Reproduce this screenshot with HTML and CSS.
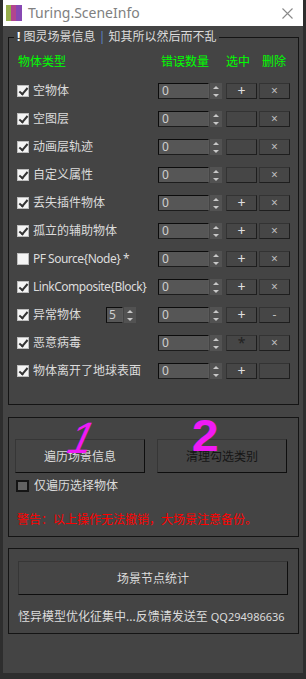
FILE: index.html
```html
<!DOCTYPE html>
<html lang="zh-CN">
<head>
    <meta charset="UTF-8">
    <meta name="viewport" content="width=device-width, initial-scale=1.0">
    <title>Turing.SceneInfo</title>
    <link rel="stylesheet" href="styles.css">
</head>
<body>
    <div class="window">
        <div class="titlebar">
            <span class="logo"><i class="s1"></i><i class="s2"></i><i class="s3"></i></span>
            <span class="title">Turing.SceneInfo</span>
            <svg class="close" width="11" height="11" viewBox="0 0 11 11"><path d="M0.5 0.5 L10.5 10.5 M10.5 0.5 L0.5 10.5" stroke="#8a8a8a" stroke-width="1.1" fill="none"/></svg>
        </div>

        <fieldset class="group info">
            <legend><b>!</b> 图灵场景信息 <span class="bar">|</span> 知其所以然后而不乱</legend>
            <div class="head">
                <span class="h-type">物体类型</span>
                <span class="h-count">错误数量</span>
                <span class="h-sel">选中</span>
                <span class="h-del">删除</span>
            </div>

            <div class="row">
                <span class="check on"></span><span class="label">空物体</span>
                <span class="spin">0</span><span class="arrows"><i class="up"></i><i class="down"></i></span>
                <span class="btn">+</span><span class="btn x">×</span>
            </div>
            <div class="row">
                <span class="check on"></span><span class="label">空图层</span>
                <span class="spin">0</span><span class="arrows"><i class="up"></i><i class="down"></i></span>
                <span class="btn"></span><span class="btn x">×</span>
            </div>
            <div class="row">
                <span class="check on"></span><span class="label">动画层轨迹</span>
                <span class="spin">0</span><span class="arrows"><i class="up"></i><i class="down"></i></span>
                <span class="btn"></span><span class="btn x">×</span>
            </div>
            <div class="row">
                <span class="check on"></span><span class="label">自定义属性</span>
                <span class="spin">0</span><span class="arrows"><i class="up"></i><i class="down"></i></span>
                <span class="btn"></span><span class="btn x">×</span>
            </div>
            <div class="row">
                <span class="check on"></span><span class="label">丢失插件物体</span>
                <span class="spin">0</span><span class="arrows"><i class="up"></i><i class="down"></i></span>
                <span class="btn">+</span><span class="btn x">×</span>
            </div>
            <div class="row">
                <span class="check on"></span><span class="label">孤立的辅助物体</span>
                <span class="spin">0</span><span class="arrows"><i class="up"></i><i class="down"></i></span>
                <span class="btn">+</span><span class="btn x">×</span>
            </div>
            <div class="row">
                <span class="check"></span><span class="label latin">PF Source{Node} *</span>
                <span class="spin">0</span><span class="arrows"><i class="up"></i><i class="down"></i></span>
                <span class="btn">+</span><span class="btn x">×</span>
            </div>
            <div class="row">
                <span class="check on"></span><span class="label latin">LinkComposite{Block}</span>
                <span class="spin">0</span><span class="arrows"><i class="up"></i><i class="down"></i></span>
                <span class="btn">+</span><span class="btn x">×</span>
            </div>
            <div class="row">
                <span class="check on"></span><span class="label short">异常物体</span>
                <span class="spin small">5</span><span class="arrows"><i class="up"></i><i class="down"></i></span>
                <span class="fill"></span>
                <span class="spin">0</span><span class="arrows"><i class="up"></i><i class="down"></i></span>
                <span class="btn">+</span><span class="btn x">-</span>
            </div>
            <div class="row">
                <span class="check on"></span><span class="label">恶意病毒</span>
                <span class="spin">0</span><span class="arrows"><i class="up"></i><i class="down"></i></span>
                <span class="btn star">*</span><span class="btn x">×</span>
            </div>
            <div class="row">
                <span class="check on"></span><span class="label">物体离开了地球表面</span>
                <span class="spin">0</span><span class="arrows"><i class="up"></i><i class="down"></i></span>
                <span class="btn">+</span><span class="btn x"></span>
            </div>
        </fieldset>

        <fieldset class="group actions">
            <div class="buttons">
                <button class="big">遍历场景信息</button>
                <button class="big dark">清理勾选类别</button>
            </div>
            <label class="only"><span class="check dim"></span>仅遍历选择物体</label>
            <p class="warn">警告：以上操作无法撤销，大场景注意备份。</p>
            <!-- 手写标注 -->
            <span class="mark one">1</span>
            <span class="mark two">2</span>
        </fieldset>

        <fieldset class="group stats">
            <button class="big wide">场景节点统计</button>
            <p class="footer">怪异模型优化征集中...反馈请发送至 <span class="qq">QQ294986636</span></p>
        </fieldset>
    </div>
</body>
</html>
```

FILE: styles.css
```css
body { margin: 0; background: #2e2e2e; font-family: "Noto Sans", "Noto Sans CJK SC", sans-serif; font-size: 12px; line-height: 16px; color: #dcdcdc; }
.window { width: 300px; height: 673px; margin-left: 3px; background: #444444; overflow: hidden; }

.titlebar { height: 26px; background: #ffffff; display: flex; align-items: center; padding-left: 3px; }
.logo { display: flex; width: 16px; height: 16px; }
.logo i { flex: 1; }
.logo .s1 { background: #97ad4b; }
.logo .s2 { background: #b2458f; }
.logo .s3 { background: #8748b3; flex: 1.2; }
.title { margin-left: 6px; color: #808080; font-size: 14px; }
.close { margin-left: auto; margin-right: 10px; }

.group { border: 1px solid #141414; margin: 0 4px 0 5px; min-width: 0; width: 291px; box-sizing: border-box; position: relative; }
.info { margin-top: 3px; padding: 0 8px 19px; }
.info legend { margin-left: -3px; padding: 0 3px; line-height: 16px; color: #dcdcdc; }
.info legend b { color: #fff; }
.info legend .bar { color: #5d86c4; }

.head { display: flex; margin: 9px 0 7px; color: #00ff00; }
.head .h-type { flex: 1; padding-left: 1px; }
.head .h-count { width: 65px; }
.head .h-sel { width: 36px; }
.head .h-del { width: 28px; }

.row { display: flex; align-items: center; height: 28px; }
.check { width: 12px; height: 12px; background: #f4f4f4; box-sizing: border-box; border: 1px solid #bdbdbd; position: relative; flex: none; }
.check.on::after { content: ""; position: absolute; left: 3px; top: 0px; width: 3px; height: 7px; border: solid #333; border-width: 0 2px 2px 0; transform: rotate(40deg); }
.label { flex: 1; margin-left: 4px; white-space: nowrap; }
.label.latin { letter-spacing: -0.5px; }
.label.short { flex: none; width: 73px; }
.fill { flex: 1; }

.spin { width: 51px; height: 16px; box-sizing: border-box; background: #565656; border: 1px solid; border-color: #0c0c0c #5a5a5a #1c1c1c #0c0c0c; padding-left: 3px; line-height: 14px; color: #cfcfcf; flex: none; }
.spin.small { width: 17px; padding-left: 2px; }
.arrows { width: 12px; height: 16px; margin-left: 1px; background: #525252; display: flex; flex-direction: column; align-items: center; justify-content: space-around; flex: none; }
.arrows i { width: 0; height: 0; border-left: 3px solid transparent; border-right: 3px solid transparent; }
.arrows .up { border-bottom: 3px solid #c8c8c8; }
.arrows .down { border-top: 3px solid #c8c8c8; }

.btn { width: 31px; height: 16px; box-sizing: border-box; margin-left: 4px; background: #464646; border: 1px solid; border-color: #333 #1e1e1e #1e1e1e #333; text-align: center; line-height: 14px; color: #e0e0e0; font-size: 14px; flex: none; }
.btn.x { margin-left: 2px; font-size: 12px; color: #bdbdbd; }
.btn.star { color: #222; }

.actions { margin-top: 12px; padding: 21px 0 8px; }
.buttons { display: flex; gap: 12px; padding-left: 6px; }
.big { width: 130px; height: 34px; background: #454545; border: 1px solid; border-color: #363636 #0e0e0e #0e0e0e #363636; color: #dcdcdc; font-family: inherit; font-size: 12px; padding: 0; }
.big.dark { color: #151515; }
.only { display: flex; align-items: center; margin: 5px 0 0 7px; height: 16px; }
.check.dim { width: 13px; height: 12px; background: #626262; border: 2px solid #151515; margin-right: 5px; }
.warn { margin: 18px 0 0 8px; color: #ff0000; }
.mark { position: absolute; color: #f01af5; font-family: "Liberation Sans", sans-serif; line-height: 1; }
.mark.one { left: 61px; top: -2px; font-size: 44px; transform: skewX(-24deg); }
.mark.two { left: 184px; top: -4px; font-size: 44px; font-weight: bold; transform: scaleX(1.1); }

.stats { margin-top: 11px; padding: 12px 0 8px; }
.big.wide { width: 270px; margin-left: 9px; }
.footer { margin: 14px 0 0 9px; white-space: nowrap; }
.qq { font-size: 11px; }
```
